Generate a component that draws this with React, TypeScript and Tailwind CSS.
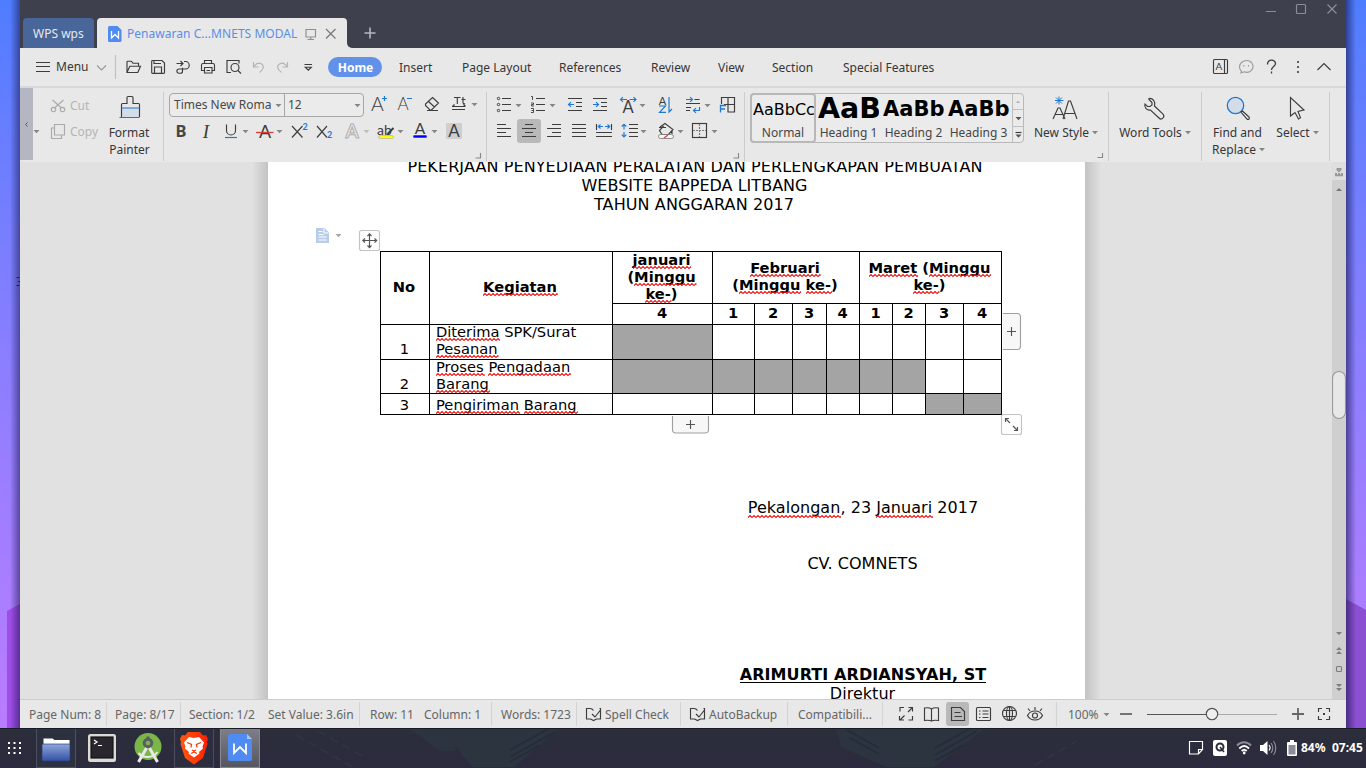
import type { ReactNode } from "react";

const INK = "#3d3d3d";
const BLUE = "#1f78d1";

type BoxProps = { x: number; y: number; w: number; h: number; className?: string; children?: ReactNode };

/* Icon tile: its user space is the window's own pixel grid. */
function Ico({ x, y, w, h, className = "", children }: BoxProps) {
  return (
    <svg
      className={`block shrink-0 ${className}`}
      width={w}
      height={h}
      viewBox={`${x} ${y} ${w} ${h}`}
      fill="none"
      stroke={INK}
      strokeWidth="1.15"
    >
      {children}
    </svg>
  );
}

function Tri({ x, y, c = "#858585" }: { x: number; y: number; c?: string }) {
  return <path d={`M${x - 3} ${y - 1.5}h6l-3 3.2z`} fill={c} stroke="none" />;
}

function L({ x, y, s, c = INK, f = "Lato", w = 400, i = false, children }: { x: number; y: number; s: number; c?: string; f?: string; w?: number; i?: boolean; children: string }) {
  return (
    <text x={x} y={y} fontSize={s} fill={c} stroke="none" fontFamily={`${f}, sans-serif`} fontWeight={w} fontStyle={i ? "italic" : "normal"} textAnchor="middle">
      {children}
    </text>
  );
}

function Err({ children }: { children: string }) {
  const id = "w" + children.replace(/[^a-zA-Z]/g, "");
  return (
    <span className="relative inline-block">
      {children}
      <svg className="absolute -right-px -bottom-px left-0 h-[3px] w-[calc(100%+1px)]">
        <defs>
          <pattern id={id} width="4" height="3" patternUnits="userSpaceOnUse">
            <path d="M-0.5 3L2 0.5L4.5 3" fill="none" stroke="#f01010" strokeWidth="1.1" />
          </pattern>
        </defs>
        <rect width="100%" height="3" fill={`url(#${id})`} />
      </svg>
    </span>
  );
}

function Divider() {
  return <div className="mt-1 h-[69px] w-px shrink-0 bg-[#cccccc]" />;
}

function TitleBar() {
  return (
    <div className="flex h-12 shrink-0 items-end bg-[#3e414d]">
      <div className="ml-[3px] flex h-[30px] w-[71px] items-center rounded-t-[4px] bg-[#486699] pt-0.5 pl-[10px] text-[#e4e8f0]">WPS wps</div>
      <div className="ml-[3px] flex h-[30px] w-[250px] items-center rounded-t-[4px] bg-[#e8e8e8]">
        <Ico x={97} y={18} w={30} h={30}>
          <path d="M109.500 26h8l4 4v10.500a1.500 1.500 0 0 1-1.500 1.500h-10.500a1.500 1.500 0 0 1-1.500-1.500v-13a1.500 1.500 0 0 1 1.500-1.500z" fill="#4f8bf0" stroke="none" />
          <path d="M111.500 31v7l3.500-3.500 3.500 3.500v-7" stroke="#fff" strokeWidth="1.300" />
        </Ico>
        <span className="w-[173px] pt-0.5 tracking-[0.04px] text-[#5a8ee6]">Penawaran C...MNETS MODAL</span>
        <Ico x={300} y={18} w={47} h={30} className="overflow-visible">
          <path d="M306 29.500h9.500v7.500h-9.500zM310.700 37v2.500M307.500 39.500h6.500" stroke="#8f8f8f" />
          <path d="M326 29l9.500 9.500M335.500 29l-9.500 9.500" stroke="#777" />
        </Ico>
      </div>
      <Ico x={347} y={18} w={40} h={30}>
        <path d="M347 43a5 5 0 0 0 5 5h-5z" fill="#e8e8e8" stroke="none" />
        <path d="M370 27.500v11M364.500 33h11" stroke="#b4b6bd" strokeWidth="1.600" />
      </Ico>
      <div className="flex-1" />
      <Ico x={1256} y={0} w={90} h={48}>
        <g stroke="#8b8e98">
          <path d="M1266 11.500h10M1327.500 4.500l9 9M1336.500 4.500l-9 9" />
          <rect x="1296.500" y="4.500" width="9" height="9" rx="1" />
        </g>
      </Ico>
    </div>
  );
}

function MenuBar() {
  return (
    <div className="flex h-10 shrink-0 items-stretch border-b-2 border-[#d9d9d9] bg-[#e8e8e8] leading-[40px] text-[#363636]">
      <Ico x={20} y={48} w={36} h={38}>
        <path d="M36 62.500h14M36 66.500h14M36 71.500h14" />
      </Ico>
      <span className="w-[36px] leading-[38px]">Menu</span>
      <Ico x={92} y={48} w={236} h={38}>
        <path d="M97 65.500l4.500 4.500 4.500-4.500" stroke="#999" />
        <path d="M115.500 55v24" stroke="#c0c0c0" />
        <path d="M127 72.500v-10.500a.8.8 0 0 1 .8-.8h3.500l1.700 2h5.500v2.500M127 72.500l2.800-6.300h10.700l-2.700 6.300z" />
        <path d="M152.500 60.500h9.500l2.500 2.500v9.500a.8.800 0 0 1-.8.800h-11.200a.8.800 0 0 1-.8-.8v-11.200a.8.800 0 0 1 .8-.8zM154.500 73v-6h7v6M154 60.500v3h7" />
        <path d="M176.500 63.500h6M180.500 61l2.500 2.500-2.500 2.500M184 61.500h1.500a3.700 3.700 0 0 1 0 7.500h-6.500a2 2 0 0 0 0 4.200h1.500a2 2 0 0 0 2-2v-3.500" />
        <path d="M204.500 63.500v-3h7v3M204 70.500h-2.500v-5.500a1.500 1.500 0 0 1 1.500-1.500h10a1.500 1.500 0 0 1 1.500 1.500v5.500h-2.500M204.500 67.500h7.500v5.500h-7.500zM206.500 70.500h3.500" />
        <path d="M231 72.500h-4v-12h12v3" />
        <circle cx="235" cy="67.500" r="4" />
        <path d="M238 70.500l3 3" />
        <path d="M253.500 62v5h5M254 66.500c2-3 5-4 7.500-2.500 3 2 2.500 5-2 8.500M287.500 62v5h-5M287 66.500c-2-3-5-4-7.500-2.500-3 2-2.500 5 2 8.500" stroke="#b4b4b4" />
        <path d="M304.500 64.500h7.500M305.300 67.200h6l-3 3z" />
      </Ico>
      <div className="my-[9px] w-[54px] rounded-full bg-[#6191e8] pl-px text-center leading-[22px] font-bold text-white">Home</div>
      <span className="ml-[17px] w-[63px]">Insert</span>
      <span className="w-[97px]">Page Layout</span>
      <span className="w-[92px]">References</span>
      <span className="w-[67px]">Review</span>
      <span className="w-[54px]">View</span>
      <span className="w-[71px]">Section</span>
      <span className="flex-1">Special Features</span>
      <Ico x={1205} y={48} w={141} h={38}>
        <rect x="1213.500" y="59.500" width="14" height="14" rx="1" />
        <path d="M1224.500 59.500v14" />
        <L x={1219} y={70} s={10}>A</L>
        <path d="M1241.500 71.500c-3-3-2.500-7 .5-9.500 3-2 7-2 9.500.5 2.500 3 2 7-1.500 9-2 1-4.500.8-5.500.3l-3.500 1zM1243.800 65v1.500M1248.500 65v1.500" stroke="#9b9b9b" />
        <path d="M1267.500 64.500c-.3-6 8-5.500 8-1 0 3-4 3-4 6.500M1271.500 71.500v2" strokeWidth="1.300" />
        <path d="M1298 61v2M1298 66v2M1298 71v2" strokeWidth="1.600" />
        <path d="M1317.500 70l6.500-6.500 6.500 6.500" />
      </Ico>
    </div>
  );
}

function FontGroup() {
  return (
    <div className="flex w-[322px] shrink-0 flex-col pl-[5px]">
      <div className="flex h-[31px] items-center">
        <div className="mt-[3px] flex h-6 w-[195px] shrink-0 rounded-[4px] border border-[#a6a6a6] bg-[#ebebeb] leading-[22px] text-[#484848]">
          <span className="w-[102px] shrink-0 pl-1 whitespace-nowrap">Times New Roma</span>
          <Ico x={272} y={94} w={12} h={22}><Tri x={278.500} y={105.500} /></Ico>
          <span className="flex-1 border-l border-[#a6a6a6] pl-[3px]">12</span>
          <Ico x={347} y={94} w={16} h={22}><Tri x={357.500} y={105.500} /></Ico>
        </div>
        <Ico x={364} y={89} w={121} h={31}>
          <L x={377.500} y={112} s={19.500} w={300}>A</L>
          <path d="M384.500 97v5M382 99.500h5M407 99.500h5" stroke={BLUE} strokeWidth="1.200" />
          <L x={403} y={111} s={17} w={300}>A</L>
          <path d="M432.500 98.500l6 5.500-7 7h-1.500l-4.500-4.500v-1.500zM428.500 102.500l6 5.500M427 111.500h11" />
          <path d="M454 98.500h6.500M457.300 98.500v6.500M463 98v5.500a1.200 1.200 0 0 0 2 1M461.500 100.500h4M452 107.500h13M454.500 105.500l-2 2M463.500 105.500l2 2M452 110.500h13" />
          <Tri x={474.500} y={105.500} />
        </Ico>
      </div>
      <Ico x={169} y={119} w={316} h={43}>
        <L x={181} y={137} s={16.500} w={700} f="Noto Sans" c="#454545">B</L>
        <L x={206} y={137.500} s={19} f="Liberation Serif" i>I</L>
        <path d="M226.500 124.500v6a4.500 4.500 0 0 0 9 0v-6" />
        <path d="M225 137.500h12" stroke={BLUE} />
        <Tri x={245.500} y={131.500} />
        <L x={265} y={137.500} s={18}>A</L>
        <path d="M256 132.500h17.500" stroke="#e03c3c" strokeWidth="1.300" />
        <Tri x={279.500} y={131.500} />
        <path d="M292 126l10.500 11.500M302.500 126l-10.500 11.500M317 126l10 11.500M327 126l-10 11.500" />
        <L x={305} y={129.500} s={9} w={700} c={BLUE}>2</L>
        <L x={329.500} y={138} s={9} w={700} c={BLUE}>2</L>
        <text x="352" y="138" fontSize="19" fontFamily="Lato, sans-serif" fontWeight="700" textAnchor="middle" stroke="#b0b0b0" strokeWidth="1" fill="none">A</text>
        <Tri x={366.500} y={131.500} c="#bdbdbd" />
        <L x={384.500} y={134.500} s={14}>ab</L>
        <path d="M387.500 134l6-6" strokeWidth="2" />
        <rect x="378.500" y="135.500" width="15" height="3" rx="1.500" fill="#ffff00" stroke="#aaa" strokeWidth=".6" />
        <Tri x={400.500} y={131.500} />
        <L x={420} y={134} s={15.500}>A</L>
        <rect x="413" y="135" width="14" height="3" rx="1" fill="#0000ff" stroke="#fff" strokeWidth=".5" />
        <Tri x={434.500} y={131.500} />
        <rect x="446" y="123" width="16" height="16" rx="1" fill="#cfcfcf" stroke="none" />
        <L x={454} y={137} s={17}>A</L>
        <path d="M480.500 153v5h-5" stroke="#8a8a8a" />
      </Ico>
    </div>
  );
}

function ParagraphGroup() {
  return (
    <div className="flex w-[257px] shrink-0 flex-col">
      <Ico x={487} y={88} w={257} h={30}>
        {[98.500, 104.500, 110.500].map((y) => (
          <g key={y}>
            <circle cx="498.500" cy={y} r="1.200" strokeWidth="1" />
            <path d={`M502 ${y}h9M536 ${y}h9`} />
          </g>
        ))}
        <path d="M531 96.500h1.500v3.500M531 103h2.500v1.500h-2v1.500h2.500M531 108.500h2.500v4h-2.500M531.500 110.500h2" strokeWidth=".9" />
        <Tri x={518.500} y={105.500} />
        <Tri x={552.500} y={105.500} />
        <path d="M568 98.500h14M576 102.500h6M576 106.500h6M568 110.500h14M593 98.500h14M601 102.500h6M601 106.500h6M593 110.500h14" />
        <path d="M574 104.500h-5M571 102.200l-2.500 2.300 2.500 2.300M593 104.500h5M596 102.200l2.500 2.300-2.500 2.300" stroke={BLUE} />
        <L x={628} y={112.500} s={16.500}>A</L>
        <path d="M627 99.500h-6M623 97.200l-2.500 2.300 2.500 2.300M629.500 99.500h6M633.500 97.200l2.500 2.300-2.500 2.300" stroke={BLUE} />
        <Tri x={642.500} y={105.500} />
        <L x={662.500} y={104.500} s={11}>A</L>
        <path d="M659 106h6.500l-6 6.300h6.500M669 97v15l3-3" stroke={BLUE} />
        <path d="M686 103.500h14M686 107.500h5" />
        <path d="M686 99.500h6M690 97.200l2.500 2.300-2.500 2.300M699.500 107v3.500h-6M696 108.200l-2.500 2.300 2.500 2.300" stroke={BLUE} />
        <path d="M694.500 99.500h5M686 110.500h4" />
        <Tri x={707.500} y={105.500} />
        <path d="M721.500 104v-6.500h13v14.500h-7M728 97.500v14.500M724 104.500h10.500" />
        <path d="M720.500 112.500v-7h5.500M720.500 109h4.500" stroke={BLUE} strokeWidth="1.300" />
      </Ico>
      <div className="flex h-[26px]">
        <Ico x={487} y={118} w={30} h={26}>
          <path d="M497 124.500h9M497 128.500h14M497 132.500h9M497 136.500h14" />
        </Ico>
        <div className="my-px h-6 w-6 rounded-[3px] bg-[#b9b9b9]">
          <Ico x={517} y={119} w={24} h={24}>
            <path d="M525 124.500h8M522 128.500h14M525 132.500h8M522 136.500h14" />
          </Ico>
        </div>
        <Ico x={541} y={118} w={203} h={26}>
          <path d="M552 124.500h9M547 128.500h14M552 132.500h9M547 136.500h14M572 124.500h14M572 128.500h14M572 132.500h14M572 136.500h14" />
          <path d="M596.500 124v6M611.500 124v6M596 132.500h16M596 136.500h16" />
          <path d="M603 126.500h-4M600.500 124.500l-2.200 2 2.200 2M605 126.500h4M607.500 124.500l2.200 2-2.200 2" stroke={BLUE} />
          <path d="M629 124.500h9M629 128.500h9M629 132.500h9M629 136.500h9" />
          <path d="M624 124.500v5M621.700 126.500l2.300-2.300 2.300 2.300M624 132v5M621.700 134.700l2.300 2.300 2.300-2.300" stroke={BLUE} />
          <Tri x={643.500} y={131.500} />
          <path d="M660 127l5-3.500 8 6-4.500 5h-6.500l-2.500-4 4-4.500M659 127.500h7M672 130v4" />
          <rect x="658.500" y="134.500" width="15" height="4" rx="2" fill="#f6f6f6" stroke="#777" strokeWidth=".8" />
          <path d="M664 138l4-3" stroke="#e03c3c" />
          <Tri x={680.500} y={131.500} />
          <rect x="692.500" y="123.500" width="14" height="14" />
          <path d="M699.500 124v13M693 130.500h13" strokeDasharray="2 1" stroke="#777" />
          <Tri x={714.500} y={131.500} />
        </Ico>
      </div>
      <Ico x={487} y={144} w={257} h={18}>
        <path d="M738.500 153v5h-5" stroke="#8a8a8a" />
      </Ico>
    </div>
  );
}

function StyleCell({ label, preview, size }: { label: string; preview: string; size: string }) {
  return (
    <div className="flex w-[65px] shrink-0 flex-col items-center">
      <div className={`flex h-[31px] w-[61px] items-center overflow-hidden font-["DejaVu_Sans"] font-bold text-black ${size}`}>{preview}</div>
      <div className="leading-4 whitespace-nowrap">{label}</div>
    </div>
  );
}

function StylesGroup() {
  return (
    <div className="flex w-[281px] shrink-0 pt-[5px] pl-[5px]">
      <div className="flex h-[50px] w-[274px] rounded-[4px] border border-[#b8b8b8] bg-[#ebebeb] text-[#454545]">
        <div className="-m-px flex w-[66px] shrink-0 flex-col items-center rounded-[4px] border-2 border-[#b8b8b8]">
          <div className="flex h-[30px] w-[62px] items-center overflow-hidden pl-px font-['DejaVu_Sans'] text-[16px] text-black">AaBbCc</div>
          <div className="leading-4">Normal</div>
        </div>
        <div className="flex w-[197px] shrink-0 pl-px">
          <StyleCell label="Heading 1" preview="AaB" size="text-[28.5px]" />
          <StyleCell label="Heading 2" preview="AaBb" size="text-[21px]" />
          <StyleCell label="Heading 3" preview="AaBb" size="text-[21px]" />
        </div>
        <Ico x={1011} y={94} w={12} h={48}>
          <path d="M1011.500 94v48M1011 109.500h12M1011 126.500h12" stroke="#c0c0c0" />
          <path d="M1014.500 103h5l-2.500-2.500z" fill="#bbb" stroke="none" />
          <Tri x={1017.500} y={118.500} c="#555" />
          <path d="M1014.500 132.500h6" />
          <Tri x={1017.500} y={136} c="#555" />
        </Ico>
      </div>
    </div>
  );
}

function BigButton({ width, icon, children }: { width: string; icon: ReactNode; children: ReactNode }) {
  return (
    <div className={`flex shrink-0 flex-col items-center leading-[17px] ${width}`}>
      <div className="h-9">{icon}</div>
      {children}
    </div>
  );
}

function Drop({ label }: { label: string }) {
  return (
    <div className="flex items-center whitespace-nowrap">
      {label}
      <Ico x={0} y={0} w={10} h={10}><Tri x={6} y={4.500} /></Ico>
    </div>
  );
}

function Ribbon() {
  return (
    <div className="flex h-[74px] shrink-0 bg-[#e8e8e8] text-[#363636]">
      <Ico x={20} y={88} w={28} h={74}>
        <rect x="20" y="87" width="13" height="73" fill="#b4b7c1" stroke="none" />
        <path d="M27.500 122.500l-2 2 2 2" stroke="#555" strokeWidth="1" />
        <Tri x={36.500} y={131.500} />
      </Ico>
      <div className="flex w-14 shrink-0 flex-col pt-[5px] text-[#b5b5b5]">
        <div className="flex h-[26px] items-center">
          <Ico x={48} y={92} w={22} h={26}>
            <g stroke="#aaa">
              <path d="M52.500 99l9 8M63.500 99l-9 8" />
              <circle cx="53.500" cy="108.500" r="2.200" />
              <circle cx="62.500" cy="108.500" r="2.200" />
            </g>
          </Ico>
          Cut
        </div>
        <div className="flex h-[26px] items-center">
          <Ico x={48} y={118} w={22} h={26}>
            <path d="M54.500 123.500h10v10.500h-10zM54 127h-2.500v10.500h10v-3" stroke="#aaa" />
          </Ico>
          Copy
        </div>
      </div>
      <BigButton width="w-[50px]" icon={
        <Ico x={114} y={89} w={30} h={36}>
          <path d="M121 108.500h18v9.500h-18z" fill="#d2dde9" stroke="none" />
          <path d="M121.500 118v-12.500a1 1 0 0 1 1-1h4.500v-6a1 1 0 0 1 1-1h4a1 1 0 0 1 1 1v6h5.500a1 1 0 0 1 1 1v12.500" />
          <path d="M121.500 109h18M119.500 118.500h20" stroke={BLUE} />
        </Ico>
      }>
        <span>Format</span>
        <span className="pl-px">Painter</span>
      </BigButton>
      <div className="w-[9px] shrink-0" />
      <Divider />
      <FontGroup />
      <Divider />
      <ParagraphGroup />
      <Divider />
      <StylesGroup />
      <div className="flex w-[82px] shrink-0">
        <BigButton width="w-[77px]" icon={
          <Ico x={1050} y={88} w={32} h={36}>
            <path d="M1054 119l5-11h2l5 11M1056 114.500h8M1064 119l5.500-18h2l6.500 18M1065.500 113.500h10.500" />
            <path d="M1060 96.500v8M1056 100.500h8.500M1057 97.500l6 6M1063 97.500l-6 6" stroke={BLUE} strokeWidth="1" />
          </Ico>
        }>
          <div className="pl-1"><Drop label="New Style" /></div>
          <Ico x={1026} y={141} w={77} h={20} className="overflow-visible">
            <path d="M1102.500 153v4.500h-5" stroke="#8a8a8a" />
          </Ico>
        </BigButton>
      </div>
      <Divider />
      <div className="flex w-[92px] shrink-0 justify-center pl-[1px]">
        <BigButton width="w-[80px]" icon={
          <Ico x={1140} y={88} w={32} h={36}>
            <path d="M1149 99.500l3 3v2.500l-2 1.500h-2.500l-2.500-2.500c-1 3 1.500 6.500 5.500 6l8.500 8a2.600 2.600 0 0 0 4-3.800l-8.500-8.200c1.500-4-1.500-8-5.500-7.500z" />
          </Ico>
        }>
          <Drop label="Word Tools" />
        </BigButton>
      </div>
      <Divider />
      <div className="flex w-[127px] shrink-0 pl-[5px]">
        <BigButton width="w-[61px]" icon={
          <Ico x={1222} y={88} w={32} h={36}>
            <circle cx="1235.500" cy="105.500" r="8.200" fill="#d2dde9" stroke={BLUE} strokeWidth="1.300" />
            <path d="M1241 112l1.500-1 6.500 6a1.200 1.200 0 0 1-2 2l-6-7z" />
          </Ico>
        }>
          <span>Find and</span>
          <div className="pl-[3px]"><Drop label="Replace" /></div>
        </BigButton>
        <BigButton width="w-[58px]" icon={
          <Ico x={1281} y={88} w={32} h={36}>
            <path d="M1290.500 97.500v18.500l4.500-3.500 3.500 6.500 2-1.200-2.500-6.300 6-1.500z" />
          </Ico>
        }>
          <div className="pl-0.5"><Drop label="Select" /></div>
        </BigButton>
      </div>
      <Divider />
    </div>
  );
}

const cell = "flex border-l border-t border-black";

function HeadNum({ children }: { children: string }) {
  return <div className={`${cell} items-center justify-center pr-px pb-[3px] font-bold`}>{children}</div>;
}

function DataCells({ filled }: { filled: number[] }) {
  return (
    <>
      {[0, 1, 2, 3, 4, 5, 6, 7, 8].map((i) => (
        <div key={i} className={filled.includes(i) ? `${cell} bg-[#a4a4a4]` : cell} />
      ))}
    </>
  );
}

function ScheduleTable() {
  return (
    <div className="relative w-[622px]">
      <div className="grid grid-cols-[49px_183px_100px_42px_38px_34px_33px_33px_33px_38px_38px] grid-rows-[52px_21px_35px_34px_21px] border-r border-b border-black text-[14.67px] leading-[17px]">
        <div className={`${cell} row-span-2 items-center justify-center pr-0.5 pb-[3px] font-bold`}>No</div>
        <div className={`${cell} row-span-2 items-center justify-center pr-0.5 pb-[3px] font-bold`}><Err>Kegiatan</Err></div>
        <div className={`${cell} flex-col items-center pr-0.5 font-bold`}>
          <div className="-mt-px"><Err>januari</Err></div>
          <div>(<Err>Minggu</Err></div>
          <div><Err>ke-</Err>)</div>
        </div>
        <div className={`${cell} col-span-4 flex-col items-center justify-center pr-0.5 pb-[3px] font-bold`}>
          <div><Err>Februari</Err></div>
          <div>(<Err>Minggu</Err> <Err>ke-</Err>)</div>
        </div>
        <div className={`${cell} col-span-4 flex-col items-center justify-center pr-0.5 pb-[3px] font-bold`}>
          <div><Err>Maret</Err> (<Err>Minggu</Err></div>
          <div><Err>ke-</Err>)</div>
        </div>
        <HeadNum>4</HeadNum>
        <HeadNum>1</HeadNum>
        <HeadNum>2</HeadNum>
        <HeadNum>3</HeadNum>
        <HeadNum>4</HeadNum>
        <HeadNum>1</HeadNum>
        <HeadNum>2</HeadNum>
        <HeadNum>3</HeadNum>
        <HeadNum>4</HeadNum>

        <div className={`${cell} items-end justify-center pr-px pb-0.5`}>1</div>
        <div className={`${cell} flex-col pl-[6px]`}>
          <div className="-mt-0.5"><Err>Diterima</Err> SPK/Surat</div>
          <div><Err>Pesanan</Err></div>
        </div>
        <DataCells filled={[0]} />

        <div className={`${cell} items-end justify-center pr-px pb-px`}>2</div>
        <div className={`${cell} flex-col pl-[6px] tracking-[0.04px]`}>
          <div className="-mt-0.5"><Err>Proses</Err> <Err>Pengadaan</Err></div>
          <div><Err>Barang</Err></div>
        </div>
        <DataCells filled={[0, 1, 2, 3, 4, 5, 6]} />

        <div className={`${cell} items-end justify-center pr-px pb-px`}>3</div>
        <div className={`${cell} items-end pb-px pl-[6px] tracking-[0.04px]`}>
          <div><Err>Pengiriman</Err> <Err>Barang</Err></div>
        </div>
        <DataCells filled={[7, 8]} />
      </div>

      <Ico x={312} y={224} w={40} h={24} className="absolute -top-[27px] -left-[68px]">
        <path d="M316 228h8.500l4.500 4.500v10.500h-13z" fill="#b9cdea" stroke="none" />
        <path d="M318.500 231.500h4M318.500 234.500h5M318.500 237h8M318.500 240h8M324 228.500v4.500h4.500" stroke="#fff" strokeWidth="1" />
        <Tri x={338.500} y={235.500} c="#a5a5a5" />
      </Ico>
      <Ico x={358} y={229} w={23} h={23} className="absolute -top-[22px] -left-[22px]">
        <rect x="359.500" y="230.500" width="20" height="20" rx="2" fill="#fdfdfd" stroke="#c4c4c4" />
        <path d="M369.500 234v13.500M363 240.500h13.500M367.500 236l2-2.200 2 2.200M367.500 245.500l2 2.200 2-2.200M365 238.500l-2.200 2 2.200 2M374.500 238.500l2.200 2-2.200 2" stroke="#555" />
      </Ico>
      <Ico x={1002} y={312} w={20} h={39} className="absolute top-[61px] left-[622px]">
        <path d="M1003 313.500h14.500a3 3 0 0 1 3 3v30a3 3 0 0 1-3 3h-14.500z" fill="#f7f7f7" stroke="none" />
        <path d="M1003 313.500h14.500a3 3 0 0 1 3 3v30a3 3 0 0 1-3 3h-14.500" stroke="#a0a0a0" />
        <path d="M1011.500 327v9M1007 331.500h9" stroke="#555" />
      </Ico>
      <Ico x={671} y={415} w={40} h={20} className="absolute top-[164px] left-[291px]">
        <path d="M672.500 416v14a3 3 0 0 0 3 3h30a3 3 0 0 0 3-3v-14z" fill="#f7f7f7" stroke="none" />
        <path d="M672.500 416v14a3 3 0 0 0 3 3h30a3 3 0 0 0 3-3v-14" stroke="#a0a0a0" />
        <path d="M690.500 420v9M686 424.500h9" stroke="#555" />
      </Ico>
      <Ico x={1000} y={413} w={23} h={23} className="absolute top-[162px] left-[620px]">
        <rect x="1001.500" y="414.500" width="20" height="20" rx="2" fill="#fdfdfd" stroke="#c4c4c4" />
        <path d="M1005.500 422v-3.500h3.500M1006 419l4 4M1017.500 427v3.500h-3.500M1017 430l-4-4" stroke="#555" />
      </Ico>
    </div>
  );
}

function DocumentArea() {
  return (
    <div className="flex h-[537px] shrink-0 overflow-hidden bg-[#e1e1e1]">
      <div className="w-[232px] shrink-0" />
      <div className="w-4 shrink-0 bg-linear-to-l from-[#c3c3c3] to-[#e1e1e1]" />
      <div className="w-[817px] shrink-0 bg-white pl-[112px] font-['DejaVu_Sans'] text-[16px] leading-[19px] text-black">
        <div className="-mt-[5px] flex w-[630px] flex-col items-center pb-[37px] tracking-[0.1px] whitespace-nowrap">
          <div>PEKERJAAN PENYEDIAAN PERALATAN DAN PERLENGKAPAN PEMBUATAN</div>
          <div className="pr-px tracking-[0.02px]">WEBSITE BAPPEDA LITBANG</div>
          <div className="pr-0.5">TAHUN ANGGARAN 2017</div>
        </div>
        <ScheduleTable />
        <div className="mt-[83px] ml-[333px] flex w-[300px] flex-col items-center tracking-[0.04px]">
          <div><Err>Pekalongan</Err>, 23 <Err>Januari</Err> 2017</div>
          <div className="mt-[37px] pr-px">CV. COMNETS</div>
          <div className="mt-[92px] h-[18px] border-b border-black font-bold tracking-[0.08px]">ARIMURTI ARDIANSYAH, ST</div>
          <div className="mt-px pr-px">Direktur</div>
        </div>
      </div>
      <div className="w-4 shrink-0 bg-linear-to-r from-[#c3c3c3] to-[#e1e1e1]" />
      <div className="flex-1" />
      <Ico x={1332} y={162} w={14} h={537}>
        <rect x="1332" y="162" width="14" height="537" fill="#cfcfcf" stroke="none" />
        <rect x="1332" y="162" width="14" height="18" fill="#dedede" stroke="none" />
        <path d="M1336.500 168h5v2l-2.500 2.500-2.500-2.500zM1335 173h2v1.500h1v-1.500h2v1.500h1v-1.500h2v3.200h-8z" fill="#999" stroke="none" />
        <path d="M1336 191h6l-3-3z" fill="#777" stroke="none" />
        <rect x="1332.500" y="371.500" width="13" height="47" rx="6.500" fill="#e7e7e7" stroke="#999" />
        <g fill="#7d7d7d" stroke="none">
          <path d="M1336 632h6l-3 3zM1336 650h6l-3-3zM1336 654h6l-3-3zM1336 684h6l-3 3zM1336 688h6l-3 3z" />
        </g>
        <rect x="1336.500" y="666.500" width="5" height="5" rx="1" stroke="#7d7d7d" />
      </Ico>
    </div>
  );
}

function Book({ x }: { x: number }) {
  return (
    <Ico x={x - 6} y={701} w={25} h={28}>
      <g transform={`translate(${x} 0)`}>
        <path d="M7.500 710.500c-1-1.500-2-2-3.500-2h-3.500v10.500h4l3 1.500 3-1.500h4v-10.500h-1M6 714l3 3 5.500-7" />
      </g>
    </Ico>
  );
}

function StatusBar() {
  const sep = "flex shrink-0 items-center self-stretch pt-0.5";
  return (
    <div className="flex h-[29px] shrink-0 items-stretch border-t border-[#cccccc] bg-[#e8e8e8] whitespace-nowrap text-[#666]">
      <div className={`${sep} w-[86px] pl-[9px]`}>Page Num: 8</div>
      <div className={`${sep} my-0.5 w-[74px] border-l border-[#d4d4d4] pl-[8px]`}>Page: 8/17</div>
      <div className={`${sep} my-0.5 w-[88px] border-l border-[#d4d4d4] pl-[8px]`}>Section: 1/2</div>
      <div className={`${sep} w-[91px]`}>Set Value: 3.6in</div>
      <div className={`${sep} my-0.5 w-[65px] border-l border-[#d4d4d4] pl-[10px]`}>Row: 11</div>
      <div className={`${sep} w-[67px]`}>Column: 1</div>
      <div className={`${sep} my-0.5 w-[85px] border-l border-[#d4d4d4] pl-[9px]`}>Words: 1723</div>
      <div className={`${sep} my-0.5 w-[104px] border-l border-[#d4d4d4] pl-[3px]`}><Book x={586} />Spell Check</div>
      <div className={`${sep} my-0.5 w-[107px] border-l border-[#d4d4d4] pl-[3px]`}><Book x={690} />AutoBackup</div>
      <div className={`${sep} my-0.5 w-[96px] border-x border-[#d4d4d4] pl-[10px]`}>Compatibili...</div>
      <Ico x={883} y={700} w={185} h={28}>
        <path d="M904 707.500h-4v4M908.500 707.500h4v4M912.500 716v4h-4M904 720h-4.500v-4M908 712l4-4M904.500 715.500l-4.500 4.500" />
        <path d="M931.500 709c-2-1.500-4-1.500-7-1v12.500c3-.5 5-.5 7 .5 2-1 4-1 7-.5v-12.500c-3-.5-5-.5-7 1zM931.500 709v12" />
        <rect x="946" y="702" width="23" height="24" rx="3" fill="#b9b9b9" stroke="none" />
        <path d="M951.500 707.500h9l4 4v9h-13zM954.500 712.500h6M954.500 716.500h7.500" />
        <rect x="976.500" y="707.500" width="14" height="13" rx="1" />
        <path d="M979 711h1.500M982.500 711h6M979 714h1.500M982.500 714h6M979 717.500h1.500M982.500 717.500h6" />
        <circle cx="1009.500" cy="713.500" r="7" />
        <ellipse cx="1009.500" cy="713.500" rx="3" ry="7" />
        <path d="M1003.500 710.500h12M1003.500 716.500h12M1009.500 706.500v14" />
        <path d="M1027.500 715.500c3-6 12-6 15 0-3 6-12 6-15 0z" />
        <circle cx="1035" cy="715.500" r="2.500" />
        <path d="M1035 707v3M1028 708.500l2 2.500M1042 708.500l-2 2.500" />
        <path d="M1056.500 702v24" stroke="#d4d4d4" />
      </Ico>
      <div className={`${sep} w-8`}>100%</div>
      <Ico x={1100} y={700} w={246} h={28}>
        <Tri x={1106.500} y={714.500} />
        <path d="M1120 714h12" strokeWidth="1.800" stroke="#666" />
        <path d="M1147 714.500h60" stroke="#555" />
        <path d="M1217 714.500h60" stroke="#aaa" />
        <circle cx="1212" cy="714" r="5.700" fill="#efefef" stroke="#555" />
        <path d="M1292 714h12M1298 708v12" strokeWidth="1.800" stroke="#666" />
        <path d="M1322 708.500h-3.500v3.500M1326 708.500h3.500v3.500M1322 719.500h-3.500v-3.500M1326 719.500h3.500v-3.500" />
        <path d="M1323 714h2" strokeWidth="2" />
      </Ico>
    </div>
  );
}

function Taskbar() {
  return (
    <div className="flex h-10 shrink-0 items-stretch border-t border-[#181b26] bg-linear-to-b from-[#2b2e3b] to-[#2c2a3e] font-bold text-white">
      <Ico x={0} y={729} w={36} h={39}>
        {[743, 748, 753].map((y) => <path key={y} d={`M8 ${y}h2M13.500 ${y}h2M19 ${y}h2`} stroke="#fff" strokeWidth="2" />)}
      </Ico>
      <Ico x={36} y={729} w={224} h={39}>
        <defs>
          <linearGradient id="folder" x1="0" y1="0" x2="0" y2="1"><stop offset="0" stopColor="#8ea6dc" /><stop offset="1" stopColor="#3450a4" /></linearGradient>
          <linearGradient id="brave" x1="0" y1="0" x2="1" y2="0"><stop offset="0" stopColor="#ff5a10" /><stop offset="1" stopColor="#ff2000" /></linearGradient>
          <linearGradient id="task" x1="0" y1="0" x2="0" y2="1"><stop offset="0" stopColor="#7e7f89" /><stop offset="1" stopColor="#55555f" /></linearGradient>
        </defs>
        <rect x="36.500" y="728.500" width="39" height="39" fill="#2d303e" stroke="#4b5060" />
        <path d="M43.500 740v-1.500h9l2 1.500h15v5h-26z" fill="#fff" stroke="none" />
        <rect x="42" y="744" width="28" height="17" rx="1" fill="url(#folder)" stroke="#2a3c78" strokeWidth=".7" />
        <rect x="88" y="734" width="28" height="28" rx="2.500" fill="#dcdad7" stroke="none" />
        <rect x="91" y="737" width="22" height="21" fill="#2a262d" stroke="#111" />
        <path d="M94 740l3 2-3 2M98 745.500h4" stroke="#fff" strokeWidth="1.200" />
        <circle cx="148" cy="746.500" r="13.500" fill="#7bb648" stroke="none" />
        <circle cx="148" cy="743" r="3.800" stroke="#5b5f63" strokeWidth="3" />
        <path d="M148 739.500v-3" stroke="#5b5f63" strokeWidth="3" />
        <path d="M146.500 748l-8 14M149.500 748l8 14" stroke="#e9e9e9" strokeWidth="3" />
        <path d="M138.500 753c5 5.500 14 5.500 19-1" stroke="#e9e9e9" strokeWidth="2" />
        <rect x="174.500" y="728.500" width="39" height="39" fill="#2c2d3e" stroke="#4b4b5c" />
        <path d="M188 732h12l3 3.500 3-.5 2 4-1 3 .5 2-4.500 14-9 6.500-9-6.500-4.500-14 .5-2-1-3 2-4 3 .5z" fill="url(#brave)" stroke="none" />
        <path d="M189 737l5 1 5-1 5 5.500-1.500 4 .5 2-4 3.500.5 1.500-5.500 4-5.500-4 .5-1.500-4-3.500.5-2-1.500-4z" fill="#fff" stroke="none" />
        <path d="M187 742.500l4.500 2-.5 3M201 742.500l-4.500 2 .5 3M192 750l2 1 2-1M191 753.500l3-1.500 3 1.500" stroke="#ff3b08" strokeWidth="1.300" />
        <rect x="220.500" y="728.500" width="39" height="39" fill="url(#task)" stroke="#858691" />
        <path d="M230 734h17l5 5v20a2 2 0 0 1-2 2h-20a2 2 0 0 1-2-2v-23a2 2 0 0 1 2-2z" fill="#4f8bf0" stroke="none" />
        <path d="M247 734l5 5h-5z" fill="#a4c4fb" stroke="none" />
        <path d="M234 743.500v9.500l6-6 6 6v-9.500" stroke="#fff" strokeWidth="1.800" />
      </Ico>
      <Ico x={260} y={729} w={924} h={39}>
        <path d="M410 729l50 0 -5 22h-15zM442 729h117l-45 38h-42zM836 729h148l-50 38h-48l-45-20z" fill="#2c3440" stroke="none" />
        <path d="M510 750l38-21M510 757l45-25M510 762l30-17M847 730l32 18M850 738l29 16M935 748l34-19M935 755l42-24M935 761l28-16" stroke="#252c39" strokeWidth="1.500" />
        <path d="M296 735l60 34M318 731l46 26M1035 765l42-24" stroke="#2e3441" strokeWidth="2" strokeDasharray="9 5" />
      </Ico>
      <Ico x={1184} y={729} w={117} h={39}>
        <path d="M1189.500 741.500h13v8l-4 4.500h-9zM1202.500 749.500h-4v4.500" stroke="#fff" />
        <rect x="1213" y="740" width="14" height="16" rx="2" fill="#fff" stroke="none" />
        <circle cx="1220" cy="747" r="3.500" stroke="#2b2c3c" strokeWidth="2" />
        <path d="M1220 747l4 5" stroke="#2b2c3c" strokeWidth="1.500" />
        <path d="M1237 745.500c4-4.300 10-4.300 14 0" stroke="#8c8d98" strokeWidth="1.900" />
        <path d="M1239.300 748.500c3-3 6.700-3 9.700 0M1241.700 751c1.500-1.500 3.500-1.500 5 0" stroke="#fff" strokeWidth="1.900" />
        <circle cx="1244.200" cy="753" r="1.400" fill="#fff" stroke="none" />
        <path d="M1260 745h3l4.500-4v14l-4.500-4h-3z" fill="#fff" stroke="none" />
        <path d="M1269 745c1.200 1.500 1.200 4 0 5.500" stroke="#fff" />
        <path d="M1271 743c2.200 3 2.200 7 0 10M1273.500 741c3 4 3 10 0 14" stroke="#8c8d98" />
        <path d="M1290 740h4v2h2a1 1 0 0 1 1 1v12a1 1 0 0 1-1 1h-8a1 1 0 0 1-1-1v-12a1 1 0 0 1 1-1h2z" fill="#fff" stroke="none" />
        <rect x="1288.500" y="745" width="7" height="9.500" fill="#8c8d98" stroke="none" />
      </Ico>
      <span className="w-[31px] leading-[38px]">84%</span>
      <span className="leading-[38px]">07:45</span>
    </div>
  );
}

export default function App() {
  return (
    <div className="flex h-[768px] w-[1366px] flex-col overflow-hidden bg-[#3e414d] font-['Noto_Sans',sans-serif] text-[12px]">
      <div className="flex h-[728px] shrink-0">
        <div className="w-5 shrink-0 bg-linear-to-b from-[#4f7dff] to-[#bb7cff]">
          <svg className="block" width="20" height="728" viewBox="0 0 20 728">
            <defs>
              <linearGradient id="shL"><stop offset="0.5" stopColor="#101040" stopOpacity="0" /><stop offset="1" stopColor="#101040" stopOpacity="0.5" /></linearGradient>
            </defs>
            <path d="M7 611l13-7v124h-13z" fill="#a04de8" />
            <rect width="20" height="728" fill="url(#shL)" />
            <path d="M16.500 277.500h3M18 281.500h2M16.500 285.500h3" stroke="#222" strokeWidth="1" />
          </svg>
        </div>
        <div className="flex w-[1326px] shrink-0 flex-col">
          <TitleBar />
          <MenuBar />
          <Ribbon />
          <DocumentArea />
          <StatusBar />
        </div>
        <div className="w-5 shrink-0 bg-linear-to-b from-[#4f7dff] to-[#bb7cff]">
          <svg className="block" width="20" height="728" viewBox="0 0 20 728">
            <defs>
              <linearGradient id="shR"><stop offset="0" stopColor="#101040" stopOpacity="0.55" /><stop offset="0.5" stopColor="#101040" stopOpacity="0" /></linearGradient>
            </defs>
            <path d="M0 599l20 11v118h-20z" fill="#8b50d2" />
            <rect width="20" height="728" fill="url(#shR)" />
          </svg>
        </div>
      </div>
      <Taskbar />
    </div>
  );
}
